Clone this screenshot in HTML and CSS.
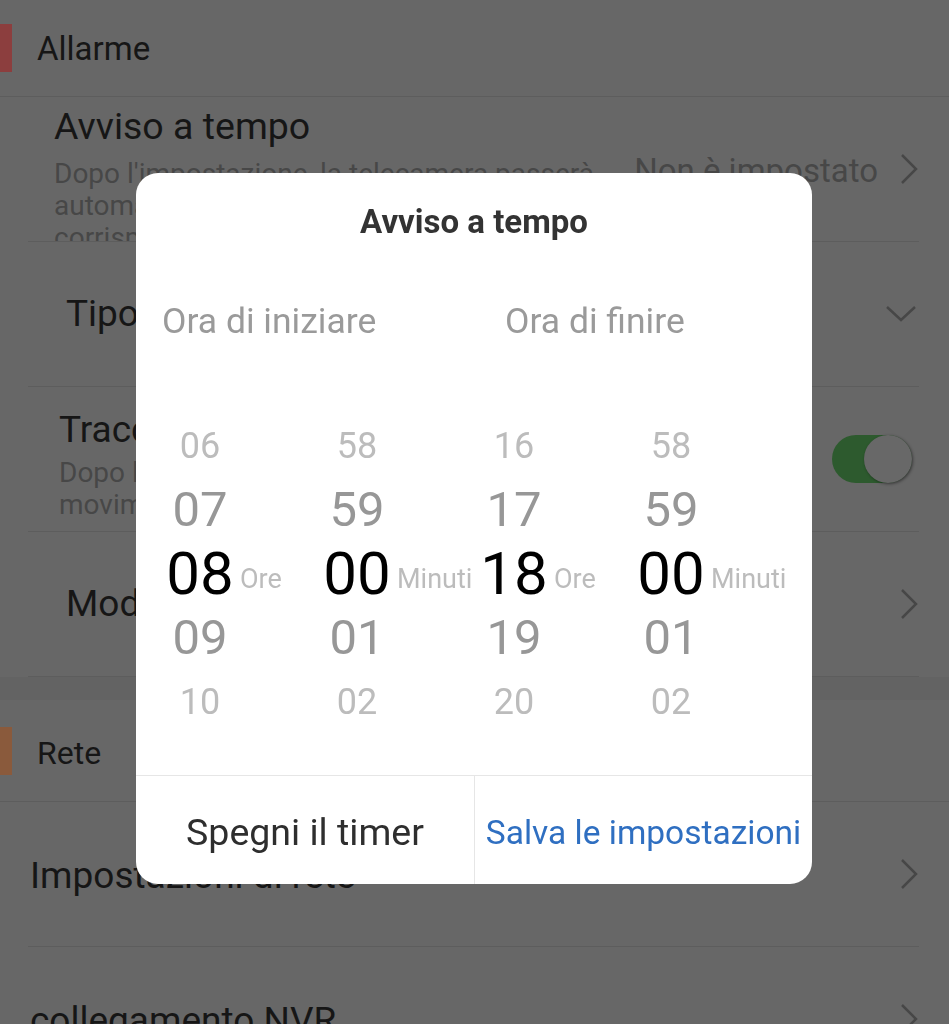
FILE: index.html
```html
<!DOCTYPE html>
<html lang="it">

<head>
    <meta charset="utf-8">
    <title>Avviso a tempo</title>
    <link rel="stylesheet" href="styles.css">
</head>

<body>
    <div class="settings">
        <div class="section-head">
            <span class="mark mark-red"></span>
            <span>Allarme</span>
        </div>

        <div class="row row-timer">
            <div class="row-main">
                <div class="row-title">Avviso a tempo</div>
                <div class="row-desc">Dopo l'impostazione, la telecamera passerà automaticamente alla modalità corrispondente nell'orario scelto</div>
            </div>
            <span class="row-value">Non è impostato</span>
            <svg class="chevron" viewBox="0 0 18 32" width="18" height="32"><path d="M2 2 L16 16 L2 30" /></svg>
        </div>

        <div class="row row-type">
            <div class="row-title">Tipo di allarme</div>
            <svg class="chevron-down" viewBox="0 0 32 18" width="32" height="18"><path d="M2 2 L16 15 L30 2" /></svg>
        </div>

        <div class="row row-track">
            <div class="row-main">
                <div class="row-title">Tracciamento</div>
                <div class="row-desc">Dopo l'apertura, la telecamera seguirà il movimento rilevato</div>
            </div>
            <span class="toggle"><span class="knob"></span></span>
        </div>

        <div class="row row-mode">
            <div class="row-title">Modalità di allarme</div>
            <svg class="chevron" viewBox="0 0 18 32" width="18" height="32"><path d="M2 2 L16 16 L2 30" /></svg>
        </div>

        <div class="section-gap"></div>

        <div class="section-head section-head-net">
            <span class="mark mark-orange"></span>
            <span>Rete</span>
        </div>

        <div class="row row-flat">
            <div class="row-title">Impostazioni di rete</div>
            <svg class="chevron" viewBox="0 0 18 32" width="18" height="32"><path d="M2 2 L16 16 L2 30" /></svg>
        </div>

        <div class="row row-flat">
            <div class="row-title">collegamento NVR</div>
            <svg class="chevron" viewBox="0 0 18 32" width="18" height="32"><path d="M2 2 L16 16 L2 30" /></svg>
        </div>
    </div>

    <div class="modal">
        <div class="dialog">
            <div class="dialog-title">Avviso a tempo</div>

            <div class="col-heads">
                <div>Ora di iniziare</div>
                <div>Ora di finire</div>
            </div>

            <div class="picker">
                <div class="wheel">
                    <span class="num far">06</span>
                    <span class="num near">07</span>
                    <span class="num sel">08</span>
                    <span class="num near">09</span>
                    <span class="num far">10</span>
                    <span class="unit">Ore</span>
                </div>
                <div class="wheel">
                    <span class="num far">58</span>
                    <span class="num near">59</span>
                    <span class="num sel">00</span>
                    <span class="num near">01</span>
                    <span class="num far">02</span>
                    <span class="unit">Minuti</span>
                </div>
                <div class="wheel">
                    <span class="num far">16</span>
                    <span class="num near">17</span>
                    <span class="num sel">18</span>
                    <span class="num near">19</span>
                    <span class="num far">20</span>
                    <span class="unit">Ore</span>
                </div>
                <div class="wheel">
                    <span class="num far">58</span>
                    <span class="num near">59</span>
                    <span class="num sel">00</span>
                    <span class="num near">01</span>
                    <span class="num far">02</span>
                    <span class="unit">Minuti</span>
                </div>
            </div>

            <div class="actions">
                <button class="action">Spegni il timer</button>
                <button class="action action-save">Salva le impostazioni</button>
            </div>
        </div>
    </div>
</body>

</html>
```

FILE: styles.css
```css
:root {
    --dim-bg: #676767;
    --dim-gap: #636363;
    --dim-line: #5d5d5d;
    --dim-text: #161616;
    --dim-sub: #474747;
    --picker-far: #bcbcbc;
    --picker-near: #979797;
    --link-blue: #2f6fc1;
}

* {
    box-sizing: border-box;
}

body {
    margin: 0;
    width: 949px;
    height: 1024px;
    overflow: hidden;
    background: var(--dim-bg);
    color: var(--dim-text);
    font-family: Roboto, 'Liberation Sans', sans-serif;
}

/* settings page behind the dialog */

.section-head {
    display: flex;
    align-items: center;
    gap: 25px;
    height: 97px;
    border-bottom: 1px solid var(--dim-line);
    font-size: 33px;
}

.section-head-net {
    height: 102px;
    font-size: 32px;
}

.section-head-net span + span {
    padding-top: 5px;
}

.mark {
    width: 12px;
    height: 48px;
}

.mark-red {
    background: #8c3e3e;
}

.mark-orange {
    background: #8a5a3c;
}

.section-gap {
    height: 23px;
    background: var(--dim-gap);
}

.row {
    display: flex;
    align-items: center;
    height: 145px;
    margin: 0 30px 0 28px;
    padding-right: 1px;
    border-bottom: 1px solid var(--dim-line);
    overflow: hidden;
}

.row-title {
    font-size: 37px;
    line-height: 44px;
    white-space: nowrap;
}

.row-desc {
    font-size: 28px;
    line-height: 32px;
    color: var(--dim-sub);
}

.row-timer {
    align-items: flex-start;
    padding-left: 26px;
}

.row-timer .row-main {
    width: 570px;
    padding-top: 7px;
}

.row-timer .row-title {
    font-size: 37.5px;
}

.row-timer .row-desc {
    margin-top: 10px;
}

.row-value {
    margin-left: auto;
    align-self: center;
    padding-top: 3px;
    font-size: 33px;
    color: var(--dim-sub);
}

.chevron {
    margin-left: auto;
    align-self: center;
    fill: none;
    stroke: var(--dim-sub);
    stroke-width: 2.5;
}

.row-value + .chevron {
    margin-left: 22px;
}

.chevron-down {
    margin-left: auto;
    margin-right: 1px;
    fill: none;
    stroke: var(--dim-sub);
    stroke-width: 2.5;
}

.row-type,
.row-mode {
    padding-left: 38px;
}

.row-track {
    padding-left: 31px;
}

.row-track .row-main {
    align-self: flex-start;
    width: 560px;
    padding-top: 21px;
}

.row-track .row-desc {
    margin-top: 5px;
}

.toggle {
    display: flex;
    justify-content: flex-end;
    width: 80px;
    height: 48px;
    margin-left: auto;
    margin-right: 6px;
    border-radius: 24px;
    background: #2d5a2e;
}

.knob {
    width: 48px;
    height: 48px;
    border-radius: 50%;
    background: #686868;
    box-shadow: 1px 1px 3px rgba(0, 0, 0, 0.45);
}

.row-flat {
    padding-left: 2px;
}

.row-flat .row-title {
    padding-top: 3px;
}

/* timer dialog */

.modal {
    position: fixed;
    inset: 0;
}

.dialog {
    width: 676px;
    margin: 173px 0 0 136px;
    background: #fff;
    border-radius: 22px;
    overflow: hidden;
}

.dialog-title {
    padding-top: 29px;
    font-size: 33px;
    font-weight: bold;
    line-height: 40px;
    text-align: center;
    color: #333;
}

.col-heads {
    display: grid;
    grid-template-columns: 343px 1fr;
    margin-top: 59px;
    padding-left: 26px;
    font-size: 35.5px;
    line-height: 40px;
    color: #9a9a9a;
}

.picker {
    display: flex;
    margin-top: 73px;
    padding: 0 0 41px 24px;
}

.wheel {
    display: grid;
    grid-template-columns: 80px 77px;
    grid-template-rows: repeat(5, 64px);
    align-items: center;
}

.num {
    grid-column: 1;
    line-height: 64px;
    text-align: center;
}

.far {
    font-size: 36px;
    color: var(--picker-far);
}

.near {
    font-size: 49px;
    color: var(--picker-near);
}

.sel {
    font-size: 60px;
    color: #000;
}

.unit {
    grid-column: 2;
    grid-row: 3;
    align-self: end;
    margin-bottom: 11px;
    font-size: 27px;
    line-height: 32px;
    color: var(--picker-far);
}

.actions {
    display: grid;
    grid-template-columns: 1fr 1fr;
    height: 109px;
    border-top: 1px solid #e6e6e6;
}

.action {
    padding: 4px 0 0;
    border: 0;
    background: none;
    font-family: inherit;
    font-size: 37.5px;
    color: #2e2e2e;
    cursor: pointer;
}

.action-save {
    border-left: 1px solid #e6e6e6;
    font-size: 33.5px;
    color: var(--link-blue);
}
```
